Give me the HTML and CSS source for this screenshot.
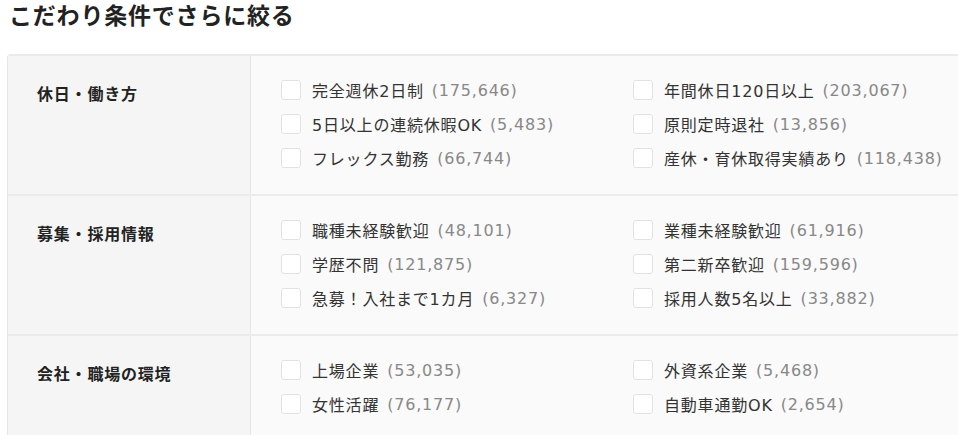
FILE: index.html
```html
<!DOCTYPE html>
<html lang="ja">
<head>
    <meta charset="UTF-8">
    <meta name="viewport" content="width=device-width, initial-scale=1.0">
    <title>こだわり条件でさらに絞る</title>
    <link rel="stylesheet" href="styles.css">
</head>
<body>
    <h2 class="title">こだわり条件でさらに絞る</h2>
    <div class="filters">
        <div class="filter-row">
            <div class="filter-label">休日・働き方</div>
            <div class="filter-options">
                <label class="option"><span class="box"></span>完全週休2日制<span class="count">(175,646)</span></label>
                <label class="option"><span class="box"></span>年間休日120日以上<span class="count">(203,067)</span></label>
                <label class="option"><span class="box"></span>5日以上の連続休暇OK<span class="count">(5,483)</span></label>
                <label class="option"><span class="box"></span>原則定時退社<span class="count">(13,856)</span></label>
                <label class="option"><span class="box"></span>フレックス勤務<span class="count">(66,744)</span></label>
                <label class="option"><span class="box"></span>産休・育休取得実績あり<span class="count">(118,438)</span></label>
            </div>
        </div>
        <div class="filter-row">
            <div class="filter-label">募集・採用情報</div>
            <div class="filter-options">
                <label class="option"><span class="box"></span>職種未経験歓迎<span class="count">(48,101)</span></label>
                <label class="option"><span class="box"></span>業種未経験歓迎<span class="count">(61,916)</span></label>
                <label class="option"><span class="box"></span>学歴不問<span class="count">(121,875)</span></label>
                <label class="option"><span class="box"></span>第二新卒歓迎<span class="count">(159,596)</span></label>
                <label class="option"><span class="box"></span>急募！入社まで1カ月<span class="count">(6,327)</span></label>
                <label class="option"><span class="box"></span>採用人数5名以上<span class="count">(33,882)</span></label>
            </div>
        </div>
        <div class="filter-row">
            <div class="filter-label">会社・職場の環境</div>
            <div class="filter-options">
                <label class="option"><span class="box"></span>上場企業<span class="count">(53,035)</span></label>
                <label class="option"><span class="box"></span>外資系企業<span class="count">(5,468)</span></label>
                <label class="option"><span class="box"></span>女性活躍<span class="count">(76,177)</span></label>
                <label class="option"><span class="box"></span>自動車通勤OK<span class="count">(2,654)</span></label>
            </div>
        </div>
    </div>
</body>
</html>
```

FILE: styles.css
```css
html, body {
    overflow: hidden;
}
body {
    margin: 0;
    background-color: #fff;
    font-family: "DejaVu Sans", "Noto Sans CJK JP", sans-serif;
    color: #333;
    letter-spacing: 0.05em;
}
.title {
    margin: 0;
    padding-left: 9px;
    font-size: 23px;
    line-height: 32px;
    font-weight: bold;
    color: #222;
}
.filters {
    margin: 22px 0 0 7px;
    width: 990px;
    border-left: 1px solid #e6e6e6;
    border-radius: 4px 0 0 0;
    overflow: hidden;
}
.filter-row {
    display: flex;
    border-top: 2px solid #ebebeb;
}
.filter-label {
    width: 213px;
    flex-shrink: 0;
    padding: 27px 0 0 29px;
    background-color: #f5f5f5;
    border-right: 1px solid #e6e6e6;
    font-size: 16px;
    font-weight: bold;
    line-height: 24px;
    color: #222;
}
.filter-options {
    flex: 1;
    display: grid;
    grid-template-columns: 352px 352px;
    align-content: start;
    padding: 17px 0 19px 30px;
    background-color: #fafafa;
}
.option {
    display: flex;
    align-items: center;
    height: 34px;
    font-size: 16px;
    white-space: nowrap;
}
.box {
    width: 18px;
    height: 18px;
    margin-right: 11px;
    border: 1px solid #e2e2e2;
    border-radius: 3px;
    background-color: #fff;
}
.count {
    margin-left: 8px;
    color: #888;
}
```
